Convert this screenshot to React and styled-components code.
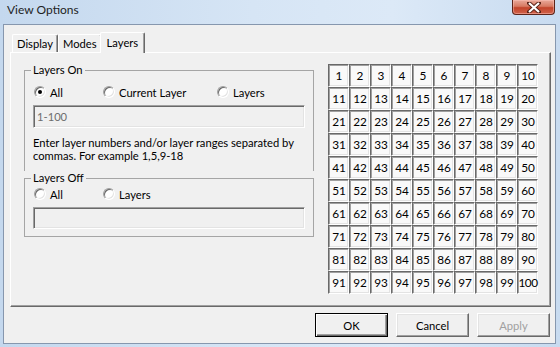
import React from "react";
import styled, { createGlobalStyle } from "styled-components";

const Global = createGlobalStyle`
  html, body { margin: 0; padding: 0; }
  body {
    width: 560px; height: 347px; overflow: hidden;
    font-family: Lato, "Noto Sans", sans-serif;
    font-size: 11.2px; color: #000;
  }
  * { box-sizing: border-box; }
`;

const Window = styled.div`
  width: 560px;
  height: 347px;
  display: flex;
  flex-direction: column;
  background: linear-gradient(to right, #c4d8ee 0%, #d6e5f5 45%, #dce9f7 70%, #c8dbf0 100%);
`;

const TitleBar = styled.div`
  height: 24px;
  flex: none;
  display: flex;
  justify-content: space-between;
  align-items: flex-start;
  padding-left: 7px;
`;

const Title = styled.span`
  line-height: 20px;
  font-size: 12px;
  color: #1e1e1e;
`;

const CloseBtn = styled.div`
  width: 43px;
  height: 15px;
  margin-right: 5px;
  border: 1px solid #5d2419;
  border-top: none;
  border-radius: 0 0 4px 4px;
  background: linear-gradient(to bottom, #e9a99a 0%, #d77a63 45%, #c2442b 55%, #d0624a 100%);
  box-shadow: inset 0 0 0 1px rgba(255, 200, 190, 0.45);
  display: flex;
  align-items: center;
  justify-content: center;
`;

const Client = styled.div`
  flex: 1;
  margin: 0 4px 3px 3px;
  border: 1px solid #8697ae;
  background: #f0f0f0;
  padding: 7px 4px 6px 6px;
  display: flex;
  flex-direction: column;
`;

const TabStrip = styled.div`
  height: 20px;
  display: flex;
  align-items: flex-end;
  padding-left: 2px;
  position: relative;
  z-index: 1;
`;

const Tab = styled.div`
  height: ${(p) => (p.$active ? "21px" : "18px")};
  margin: ${(p) => (p.$active ? "0 -2px -1px" : "0")};
  padding: 0 ${(p) => (p.$active ? "6px" : "4px")};
  display: flex;
  align-items: center;
  background: #f0f0f0;
  border-top: 1px solid #fff;
  border-left: 1px solid #fff;
  border-right: 1px solid #696969;
  border-radius: 2px 2px 0 0;
  box-shadow: inset -1px 0 0 #a0a0a0;
  position: relative;
  z-index: ${(p) => (p.$active ? 2 : 1)};
  padding-bottom: ${(p) => (p.$active ? "2px" : "0")};
`;

const Panel = styled.div`
  height: 255px;
  border-top: 1px solid #fff;
  border-left: 1px solid #fff;
  border-right: 1px solid #696969;
  border-bottom: 1px solid #696969;
  box-shadow: inset -1px -1px 0 #a0a0a0;
  display: flex;
  align-items: flex-start;
  gap: 14px;
  padding: 10px 0 0 13px;
`;

const Groups = styled.div`
  width: 290px;
  display: flex;
  flex-direction: column;
`;

const Group = styled.fieldset`
  margin: 0;
  padding: 0 8px ${(p) => (p.$last ? "7px" : "9px")};
  border: 1px solid #a5a5a5;
  border-bottom: ${(p) => (p.$last ? "1px solid #a5a5a5" : "none")};
  min-width: 0;
`;

const Legend = styled.legend`
  padding: 0 2px;
  margin-left: -2px;
  line-height: 14px;
`;

const RadioRow = styled.div`
  display: grid;
  grid-template-columns: 69px 114px auto;
  height: 16px;
  align-items: center;
  padding-left: 1px;
  margin-top: ${(p) => p.$mt || 0}px;
`;

const RadioItem = styled.label`
  display: flex;
  align-items: center;
  gap: 4px;
  white-space: nowrap;
`;

const RadioDot = styled.span`
  width: 12px;
  height: 12px;
  flex: none;
  border-radius: 50%;
  border: 1px solid;
  border-color: #a0a0a0 #fff #fff #a0a0a0;
  background: #fff;
  box-shadow: inset 1px 1px 0 #696969, inset -1px -1px 0 #e3e3e3;
  display: flex;
  align-items: center;
  justify-content: center;
  &::after {
    content: "";
    width: 4px;
    height: 4px;
    border-radius: 50%;
    background: ${(p) => (p.$checked ? "#000" : "transparent")};
  }
`;

const Field = styled.div`
  height: ${(p) => p.$h}px;
  margin-top: 5px;
  border: 1px solid;
  border-color: #a0a0a0 #fff #fff #a0a0a0;
  box-shadow: inset 1px 1px 0 #696969, inset -1px -1px 0 #e3e3e3;
  background: #f0f0f0;
  color: #6d6d6d;
  padding: 0 3px;
  display: flex;
  align-items: center;
`;

const Help = styled.p`
  margin: 8px 0 0;
  line-height: 13px;
`;

const LayerGrid = styled.div`
  margin-top: 1px;
  display: grid;
  grid-template-columns: repeat(10, 21px);
  grid-auto-rows: 23px;
`;

const Cell = styled.div`
  border: 1px solid;
  border-color: #696969 #fff #fff #696969;
  box-shadow: inset 1px 1px 0 #a0a0a0, inset -1px -1px 0 #e3e3e3;
  background: #f9f9f9;
  display: flex;
  align-items: center;
  justify-content: center;
  padding-left: 1px;
  font-size: 11.8px;
  letter-spacing: ${(p) => (p.$wide ? "-0.5px" : "0")};
`;

const ButtonRow = styled.div`
  display: flex;
  justify-content: flex-end;
  gap: 8px;
  margin-top: 6px;
  padding-right: 1px;
`;

const Button = styled.div`
  width: 73px;
  height: 24px;
  border: 1px solid;
  border-color: ${(p) => (p.$primary ? "#000" : "#fff #696969 #696969 #fff")};
  box-shadow: ${(p) =>
    p.$primary
      ? "inset 1px 1px 0 #fff, inset -1px -1px 0 #696969, inset -2px -2px 0 #a0a0a0"
      : "inset -1px -1px 0 #a0a0a0, inset 1px 1px 0 #e3e3e3"};
  background: #f0f0f0;
  color: ${(p) => (p.$disabled ? "#a0a0a0" : "#000")};
  display: flex;
  align-items: center;
  justify-content: center;
`;

export default function App() {
  const cells = Array.from({ length: 100 }, (_, i) => i + 1);
  return (
    <>
      <Global />
      <Window>
        <TitleBar>
          <Title>View Options</Title>
          <CloseBtn>
            <svg width="14" height="11" viewBox="0 0 14 11">
              <path d="M2 1 L12 10 M12 1 L2 10" stroke="#5a2318" strokeWidth="4" strokeLinecap="square" />
              <path d="M2 1 L12 10 M12 1 L2 10" stroke="#fff" strokeWidth="2.2" />
            </svg>
          </CloseBtn>
        </TitleBar>
        <Client>
          <TabStrip>
            <Tab>Display</Tab>
            <Tab>Modes</Tab>
            <Tab $active>Layers</Tab>
          </TabStrip>
          <Panel>
            <Groups>
              <Group>
                <Legend>Layers On</Legend>
                <RadioRow $mt={7}>
                  <RadioItem><RadioDot $checked />All</RadioItem>
                  <RadioItem><RadioDot />Current Layer</RadioItem>
                  <RadioItem><RadioDot />Layers</RadioItem>
                </RadioRow>
                <Field $h={23}>1-100</Field>
                <Help>
                  Enter layer numbers and/or layer ranges separated by commas. For example 1,5,9-18
                </Help>
              </Group>
              <Group $last>
                <Legend>Layers Off</Legend>
                <RadioRow $mt={1}>
                  <RadioItem><RadioDot />All</RadioItem>
                  <RadioItem><RadioDot />Layers</RadioItem>
                </RadioRow>
                <Field $h={22} />
              </Group>
            </Groups>
            <LayerGrid>
              {cells.map((n) => (
                <Cell key={n} $wide={n === 100}>{n}</Cell>
              ))}
            </LayerGrid>
          </Panel>
          <ButtonRow>
            <Button $primary>OK</Button>
            <Button>Cancel</Button>
            <Button $disabled>Apply</Button>
          </ButtonRow>
        </Client>
      </Window>
    </>
  );
}
